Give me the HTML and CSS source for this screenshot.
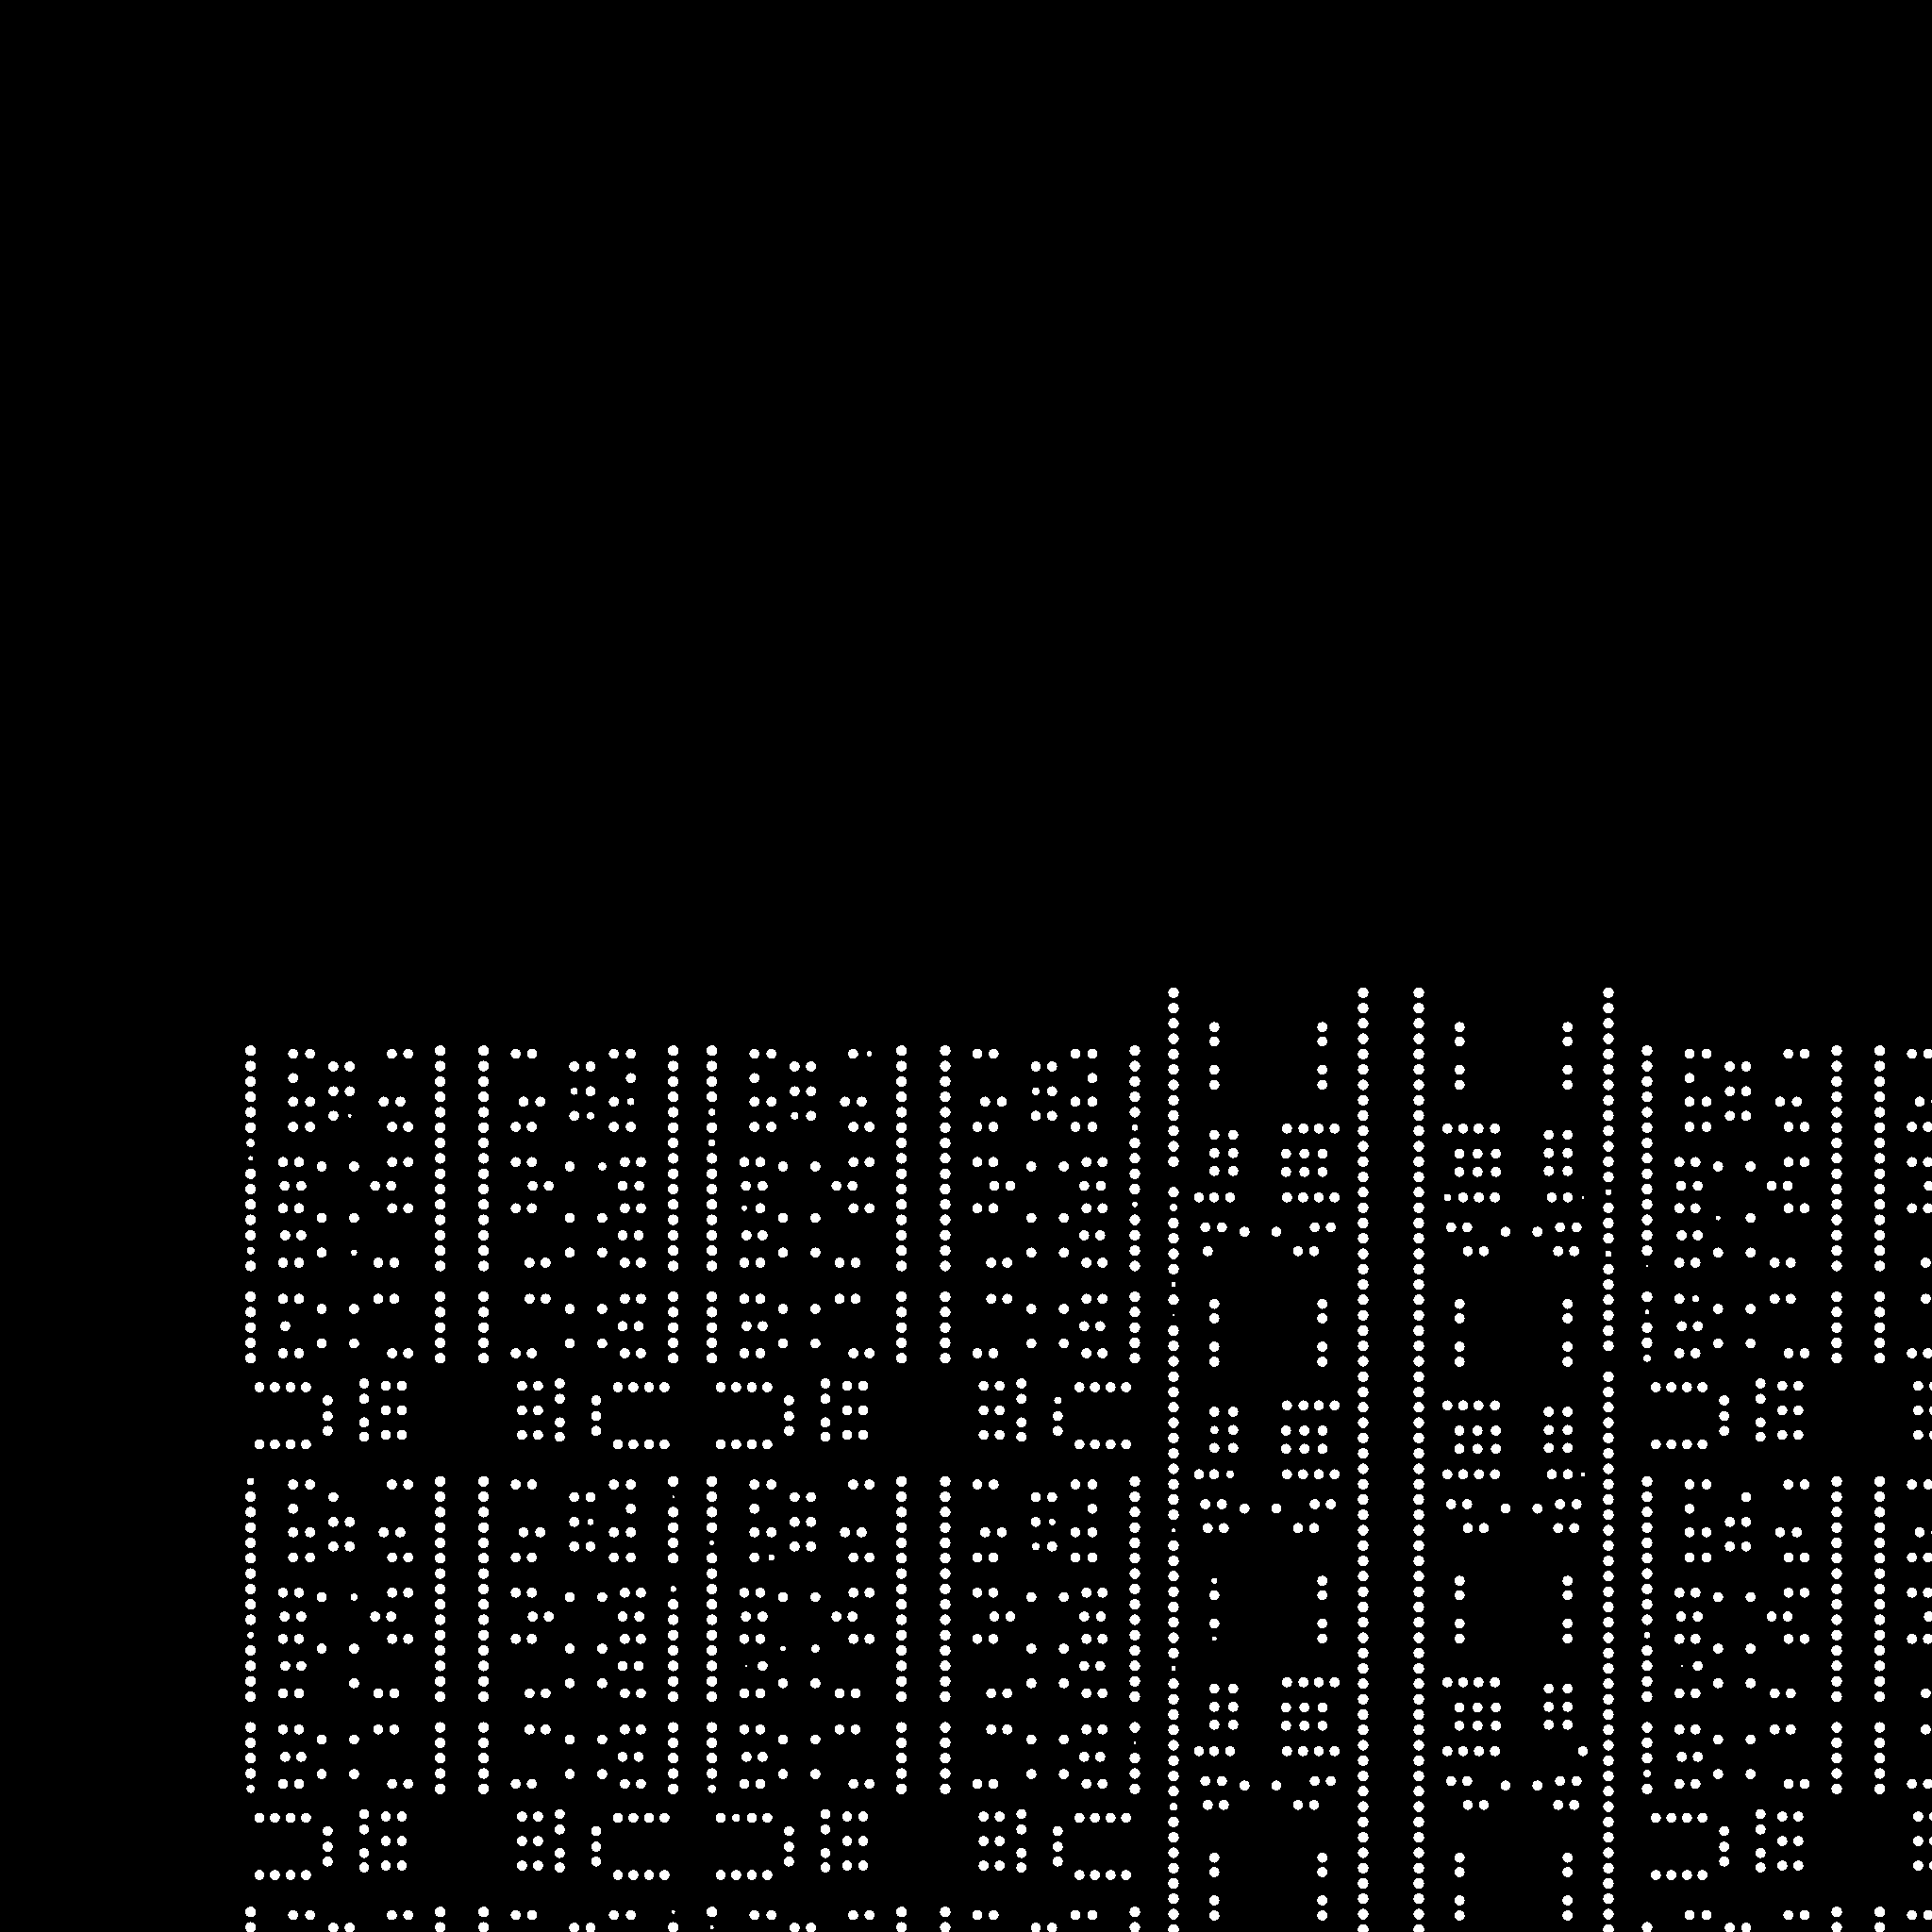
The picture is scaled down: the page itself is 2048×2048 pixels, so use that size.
FILE: index.html
```html
<!DOCTYPE html>
<html lang="en">
<head>
<meta charset="utf-8">
<title>Dot pattern</title>
<link rel="stylesheet" href="styles.css">
</head>
<body class="page">
<svg id="dots" class="canvas" width="2048" height="2048" viewBox="0 0 2048 2048" xmlns="http://www.w3.org/2000/svg" aria-label="Dot matrix pattern"></svg>
<script src="app.js"></script>
</body>
</html>
```
FILE: styles.css
```css
html, body {
  margin: 0;
  padding: 0;
  background: #000;
}
.page {
  width: 2048px;
  height: 2048px;
  overflow: hidden;
}
.canvas {
  display: block;
  fill: #fff;
  shape-rendering: crispEdges;
}
```
FILE: app.js
```js
// Dot field: tiles of braille-like cells, measured from the reference.
var BAR_R = 5.7, DOT_R = 5.4, STEP = 16.3, W = 201;
var dots = [];

function add(x, y, r) { dots.push({ x: x, y: y, r: r }); }

function bars(L, y, r) {
  add(L, y, r);
  add(L + W, y, r);
}

// ---- short tiles (A / mirrored B)
var A_ROWS = [
  [81, [212, 266, 526, 578]], [121, [340, 392]], [158, [212]], [200, [340, 392]],
  [233, [212, 266, 500, 553]], [278, [340, 392]], [313, [212, 266, 527, 578]],
  [425, [180, 231, 527, 578]], [439, [303, 406]], [501, [185, 238, 473, 524]],
  [572, [180, 231, 527, 578]], [603, [303, 406]], [658, [187, 238]], [713, [303, 406]],
  [745, [180, 231, 483, 534]], [860, [180, 231, 483, 534]], [892, [303, 406]],
  [947, [187, 238]], [1002, [303, 406]], [1033, [180, 231, 527, 578]],
  [1141, [105, 154, 204, 253]], [1323, [105, 154, 204, 253]],
  [1183, [322]], [1233, [322]], [1280, [322]],
  [1129, [438]], [1178, [438]], [1253, [438]], [1299, [438]],
  [1137, [507, 558]], [1215, [507, 558]], [1293, [507, 558]]
];

function tileA(L, mirror) {
  for (var n = 0; n < 3; n++) {
    var T = 1113.8 + 456.5 * n;
    for (var k = 0; k <= 20; k++) {
      if (k !== 15) bars(L, T + k * STEP, BAR_R);
    }
    A_ROWS.forEach(function (row) {
      row[1].forEach(function (zx) {
        var rel = (zx - 77) / 3;
        add(mirror ? L + W - rel : L + rel, T + (row[0] - 71) / 3, DOT_R);
      });
    });
  }
}

// ---- tall tiles (C / mirrored C)
var C_ROWS = [
  [176, [202, 545]], [222, [202, 545]], [312, [202, 545]], [360, [202, 545]],
  [519, [202, 262]], [577, [202, 262]], [634, [202, 262]],
  [499, [433, 485, 534, 584]], [579, [430, 488, 546]], [637, [430, 488, 546]],
  [718, [153, 201, 252, 433, 484, 534, 584]],
  [813, [173, 226, 521, 572]], [827, [298, 399]], [889, [181, 232, 468, 519]]
];

function tileC(L, mirror) {
  for (var k = 0; k <= 61; k++) bars(L, 1052.3 + k * 16.28, BAR_R);
  for (var n = 0; n < 4; n++) {
    C_ROWS.forEach(function (row) {
      row[1].forEach(function (zx) {
        var rel = (zx - 72) / 3;
        add(mirror ? L + W - rel : L + rel, 1030 + row[0] / 3 + 293.5 * n, DOT_R);
      });
    });
  }
}

tileA(265.7, false);
tileA(512.7, true);
tileA(754.7, false);
tileA(1002, true);
tileC(1244, false);
tileC(1504, true);
tileA(1746, false);
tileA(1992.7, true);

// ---- print defects: [x, y, radius]; radius 0 means the dot dropped out
var DEFECTS = [
  [369.3, 1182.7, 2], [265.7, 1229.3, 2.5], [265.7, 1212, 4.4], [265.7, 1326, 4],
  [374.7, 1327.7, 3.2], [319.3, 1405.7, 0], [609, 1156.7, 3.8], [626.7, 1182.7, 3.8],
  [667.3, 1168.3, 3.8], [638.7, 1236.7, 4.4],
  [370.7, 1586.7, 0], [374, 1693.3, 3.8], [341.3, 1785, 0], [265.7, 1571, 3.8],
  [265.7, 1733.3, 3.4], [265.7, 1895, 4.4], [713.3, 1587, 1.2], [713.3, 1668, 0],
  [713.3, 1685, 3.2], [754, 1636, 2.5], [626.7, 1612.7, 3.4],
  [1297.3, 1326.3, 0], [1244, 1248.7, 0], [1243, 1281, 4], [1243, 1362, 2.5],
  [1244, 1398.3, 1.2], [1675.3, 1269.3, 1.5], [1705, 1265, 3.4], [1705, 1330, 3.4],
  [1287, 1515.7, 4.4], [1535, 1269.3, 3.8], [1705, 1444.3, 0],
  [1243.3, 1625.7, 2], [1289, 1676.7, 3], [1289, 1736, 2.5], [1243.3, 1769.3, 2.5],
  [1304, 1562.7, 4], [1677.3, 1563.3, 2.4], [1645.3, 1856, 0], [1662, 1856, 0],
  [1243.7, 1916, 4.4],
  [1821, 1291.7, 2.5], [1747.3, 1342, 1.2], [1745, 1390, 2.5], [1797.3, 1377.3, 3.6],
  [1746, 1439, 3.8],
  [1833.3, 1586.7, 0], [1782.3, 1764, 1.2], [1745.3, 1734, 3.4], [1746, 1879, 3.8],
  [1746, 2027, 0],
  [921.7, 1117.3, 2.8], [754.7, 1178, 3.8], [754.7, 1211, 3.8], [789, 1280.7, 2.8],
  [1202.3, 1194, 3.4], [1202.3, 1277.3, 2.8], [842.3, 1183, 4], [1098, 1156.7, 4],
  [1121, 1485, 3.8],
  [817.3, 1650.7, 3.2], [830, 1749, 2.8], [864, 1748.3, 4.4], [789.3, 1764.7, 1.2],
  [1202, 1846.7, 1.5], [781.3, 1927, 4.2], [754, 1895, 4.4], [1116, 1614, 3.4],
  [1098.3, 1639.3, 4], [714.3, 2028, 2], [753.3, 2043.3, 2]
];

DEFECTS.forEach(function (d) {
  var best = null, bestDist = 64;
  dots.forEach(function (p) {
    var dist = (p.x - d[0]) * (p.x - d[0]) + (p.y - d[1]) * (p.y - d[1]);
    if (dist < bestDist) { bestDist = dist; best = p; }
  });
  if (best) best.r = d[2];
});

var svg = document.getElementById('dots');
var NS = 'http://www.w3.org/2000/svg';
dots.forEach(function (p) {
  if (p.r <= 0) return;
  var c = document.createElementNS(NS, 'circle');
  c.setAttribute('cx', p.x.toFixed(1));
  c.setAttribute('cy', p.y.toFixed(1));
  c.setAttribute('r', p.r);
  svg.appendChild(c);
});
```
